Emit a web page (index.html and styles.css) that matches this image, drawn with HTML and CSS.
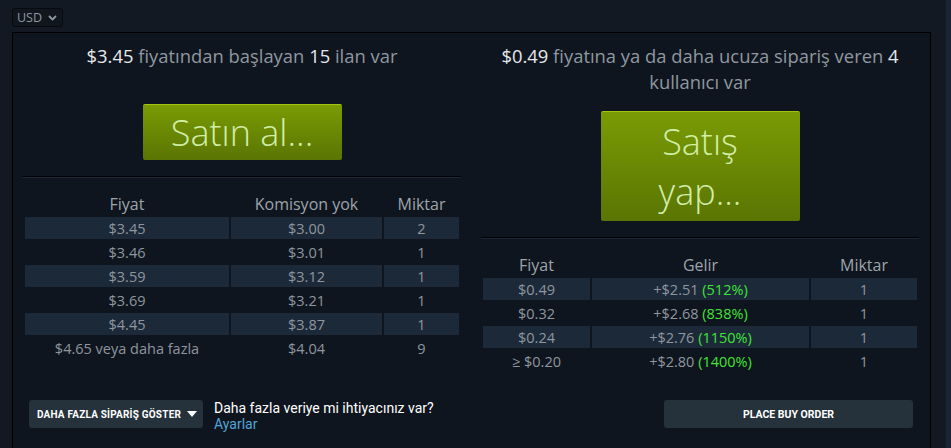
FILE: index.html
```html
<!DOCTYPE html>
<html lang="tr">
<head>
  <meta charset="utf-8"/>
  <meta name="viewport" content="width=device-width,initial-scale=1"/>
  <title>Market</title>
  <link rel="stylesheet" href="styles.css">
</head>
<body>
  <div class="page">
    <main class="market">
      <div class="currency">
        <span>USD</span>
        <svg width="9" height="6" viewBox="0 0 9 6"><path d="M1 1l3.5 3.5L8 1" fill="none" stroke="#8f98a0" stroke-width="1.8"/></svg>
      </div>

      <div class="orders">
        <section class="col">
          <div class="head"><b>$3.45</b> fiyatından başlayan <b>15</b> ilan var</div>
          <div class="big-btn"><span>Satın al...</span></div>
          <hr class="sep">
          <table class="book">
            <tr><th class="c1">Fiyat</th><th class="c2">Komisyon yok</th><th class="c3">Miktar</th></tr>
            <tr class="alt"><td>$3.45</td><td>$3.00</td><td>2</td></tr>
            <tr><td>$3.46</td><td>$3.01</td><td>1</td></tr>
            <tr class="alt"><td>$3.59</td><td>$3.12</td><td>1</td></tr>
            <tr><td>$3.69</td><td>$3.21</td><td>1</td></tr>
            <tr class="alt"><td>$4.45</td><td>$3.87</td><td>1</td></tr>
            <tr><td>$4.65 veya daha fazla</td><td>$4.04</td><td>9</td></tr>
          </table>
        </section>

        <section class="col">
          <div class="head"><b>$0.49</b> fiyatına ya da daha ucuza sipariş veren <b>4</b> kullanıcı var</div>
          <div class="big-btn tall"><span>Satış<br>yap...</span></div>
          <hr class="sep">
          <table class="book right">
            <tr><th class="r1">Fiyat</th><th class="r2">Gelir</th><th class="r3">Miktar</th></tr>
            <tr class="alt"><td>$0.49</td><td>+$2.51 <em>(512%)</em></td><td>1</td></tr>
            <tr><td>$0.32</td><td>+$2.68 <em>(838%)</em></td><td>1</td></tr>
            <tr class="alt"><td>$0.24</td><td>+$2.76 <em>(1150%)</em></td><td>1</td></tr>
            <tr><td>≥ $0.20</td><td>+$2.80 <em>(1400%)</em></td><td>1</td></tr>
          </table>
        </section>

        <div class="foot left">
          <button class="small-btn more">DAHA FAZLA SİPARİŞ GÖSTER
            <svg width="10" height="6" viewBox="0 0 10 6"><path d="M0 0h10L5 6z" fill="#fff"/></svg>
          </button>
          <div class="need">
            Daha fazla veriye mi ihtiyacınız var?<br>
            <a href="#">Ayarlar</a>
          </div>
        </div>
        <div class="foot right">
          <button class="small-btn place">PLACE BUY ORDER</button>
        </div>
      </div>
    </main>
    <div class="edge"></div>
  </div>
</body>
</html>
```

FILE: styles.css
```css
html, body {
  margin: 0;
  height: 100%;
  overflow: hidden;
}
body {
  background: #121922;
  font-family: "Open Sans", sans-serif;
  color: #8f98a0;
}
.page {
  display: flex;
  height: 100%;
}
.market {
  width: 919px;
  padding: 8px 0 0 12px;
}
.edge {
  margin-left: 15px;
  flex: 1;
  background: #1a2434;
}

.currency {
  display: flex;
  width: fit-content;
  align-items: center;
  gap: 6px;
  height: 17px;
  padding: 0 5px 0 4px;
  border: 1px solid #070a0e;
  border-radius: 3px;
  background: #10161e;
  font-size: 12.5px;
  color: #8f98a0;
}
.currency span {
  line-height: 17px;
}

.orders {
  margin-top: 5px;
  border: 1px solid #000;
  border-bottom: none;
  background: #0f151e;
  height: 420px;
  display: grid;
  grid-template-columns: 458px 458px;
  grid-template-rows: auto 1fr;
}
.col {
  padding: 10px 10px 0;
  text-align: center;
}
.head {
  min-height: 45px;
  margin-bottom: 16px;
  font-size: 18.4px;
  line-height: 26px;
  color: #8f98a0;
  padding: 0 6px;
}
.head b {
  font-weight: normal;
  color: #e5e9ec;
}

.big-btn {
  display: flex;
  align-items: center;
  justify-content: center;
  margin: 0 auto;
  width: 199px;
  height: 56px;
  box-sizing: border-box;
  border-radius: 2px;
  border-top: 1px solid #a2c40a;
  background: linear-gradient(to bottom, #7a9b04 0%, #5a7503 100%);
  color: #d2efa9;
  font-size: 36px;
  font-weight: 300;
}
.big-btn.tall {
  height: 110px;
  line-height: 50px;
}

.sep {
  margin: 16px 0 13px;
  height: 1px;
  border: none;
  background: #000;
  border-bottom: 1px solid #1b2a3a;
}

.book {
  width: 100%;
  border-spacing: 2px;
  font-size: 14.5px;
  color: #8e969e;
}
.book th {
  font-weight: normal;
  color: #9da4ab;
  font-size: 16px;
  height: 22px;
  padding: 0;
}
.book td {
  height: 22px;
  padding: 0;
}
.book tr.alt td {
  background: #1c2939;
}
.book .c1 { width: 204px; }
.book .c2 { width: 151px; }
.book .r1 { width: 107px; }
.book .r3 { width: 106px; }
.book em {
  font-style: normal;
  color: #3ee536;
}

.foot {
  display: flex;
  align-items: flex-start;
  padding-top: 26px;
  font-family: Roboto, sans-serif;
}
.foot.left {
  padding-left: 16px;
  gap: 11px;
}
.foot.right {
  justify-content: flex-end;
  padding-right: 16px;
}
.small-btn {
  height: 28px;
  border: none;
  border-radius: 3px;
  background: #25313b;
  color: #fff;
  font-family: Roboto, sans-serif;
  font-weight: 700;
  font-size: 10.5px;
  white-space: nowrap;
  cursor: pointer;
}
.more {
  width: 174px;
  display: flex;
  align-items: center;
  gap: 6px;
  padding: 0 0 0 8px;
  font-size: 10px;
  letter-spacing: 0.2px;
}
.place {
  width: 249px;
}
.need {
  font-size: 14px;
  line-height: 16px;
  color: #fff;
  text-align: left;
}
.need a {
  color: #4fa5d6;
  text-decoration: none;
}
```
